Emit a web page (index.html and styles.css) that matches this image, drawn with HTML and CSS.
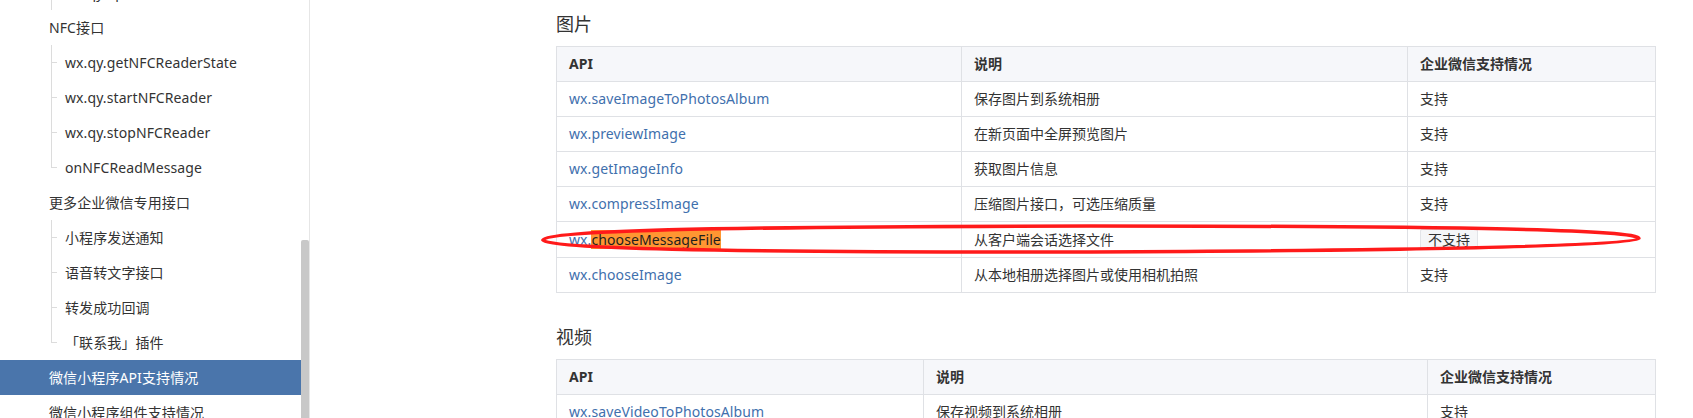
FILE: index.html
```html
<!DOCTYPE html>
<html lang="zh-CN">
<head>
<meta charset="utf-8">
<title>微信小程序API支持情况</title>
<link rel="stylesheet" href="styles.css">
</head>
<body>
<div class="page">
  <aside class="sidebar">
    <nav class="nav">
      <ul class="tree">
        <li class="sub cut">wx.qy.openUserProfile</li>
        <li class="group">NFC接口</li>
        <li class="subs">
          <ul>
            <li class="sub">wx.qy.getNFCReaderState</li>
            <li class="sub">wx.qy.startNFCReader</li>
            <li class="sub">wx.qy.stopNFCReader</li>
            <li class="sub last">onNFCReadMessage</li>
          </ul>
        </li>
        <li class="group">更多企业微信专用接口</li>
        <li class="subs">
          <ul>
            <li class="sub">小程序发送通知</li>
            <li class="sub">语音转文字接口</li>
            <li class="sub">转发成功回调</li>
            <li class="sub last">「联系我」插件</li>
          </ul>
        </li>
        <li class="group active">微信小程序API支持情况</li>
        <li class="group">微信小程序组件支持情况</li>
      </ul>
    </nav>
    <div class="scrollbar"><div class="thumb"></div></div>
  </aside>

  <main class="content">
    <h3 class="section-title">图片</h3>
    <table class="api-table t-image">
      <colgroup><col class="c1"><col class="c2"><col class="c3"></colgroup>
      <thead>
        <tr><th>API</th><th>说明</th><th>企业微信支持情况</th></tr>
      </thead>
      <tbody>
        <tr><td><a class="api-link">wx.saveImageToPhotosAlbum</a></td><td>保存图片到系统相册</td><td>支持</td></tr>
        <tr><td><a class="api-link">wx.previewImage</a></td><td>在新页面中全屏预览图片</td><td>支持</td></tr>
        <tr><td><a class="api-link">wx.getImageInfo</a></td><td>获取图片信息</td><td>支持</td></tr>
        <tr><td><a class="api-link">wx.compressImage</a></td><td>压缩图片接口，可选压缩质量</td><td>支持</td></tr>
        <tr class="tall"><td><a class="api-link">wx.<mark class="find">chooseMessageFile</mark></a></td><td>从客户端会话选择文件</td><td><code class="tag">不支持</code></td></tr>
        <tr><td><a class="api-link">wx.chooseImage</a></td><td>从本地相册选择图片或使用相机拍照</td><td>支持</td></tr>
      </tbody>
    </table>

    <h3 class="section-title">视频</h3>
    <table class="api-table t-video">
      <colgroup><col class="c1"><col class="c2"><col class="c3"></colgroup>
      <thead>
        <tr><th>API</th><th>说明</th><th>企业微信支持情况</th></tr>
      </thead>
      <tbody>
        <tr><td><a class="api-link">wx.saveVideoToPhotosAlbum</a></td><td>保存视频到系统相册</td><td>支持</td></tr>
        <tr><td><a class="api-link">wx.chooseVideo</a></td><td>拍摄视频或从手机相册中选视频</td><td>支持</td></tr>
      </tbody>
    </table>
  </main>

  <svg class="annotation" width="1693" height="418" viewBox="0 0 1693 418" aria-hidden="true">
    <path d="M543 240 C548 231 690 226.5 1091 226 C1470 226 1639 230 1639 238.5 C1639 246 1420 250.5 1091 252 C700 252.5 548 248 543 240 Z" fill="none" stroke="#ff1a1a" stroke-width="3.5"/>
  </svg>
</div>
</body>
</html>
```

FILE: styles.css
```css
* { box-sizing: border-box; }

html, body {
  margin: 0;
  padding: 0;
  background: #fff;
}

body {
  width: 1693px;
  height: 418px;
  overflow: hidden;
  font-family: "Noto Sans", "Noto Sans CJK SC", sans-serif;
  font-size: 14px;
  color: #333;
}

.page {
  position: relative;
  display: flex;
  height: 418px;
  overflow: hidden;
}

/* ---------- sidebar ---------- */
.sidebar {
  flex: 0 0 310px;
  display: flex;
  border-right: 1px solid #e6e6e6;
  height: 418px;
  overflow: hidden;
}

.nav {
  flex: 0 0 301px;
  overflow: hidden;
}

.tree, .tree ul {
  list-style: none;
  margin: 0;
  padding: 0;
}

.tree {
  margin-top: -25px;
}

.group {
  height: 35px;
  line-height: 35px;
  padding-left: 49px;
  color: #333;
  white-space: nowrap;
  letter-spacing: 0.1px;
}

.group.active {
  background: #4a75ab;
  color: #fff;
}

.subs ul {
  margin-left: 51px;
}

.sub {
  height: 35px;
  line-height: 35px;
  padding-left: 14px;
  white-space: nowrap;
  color: #333;
  letter-spacing: 0.1px;
  background:
    linear-gradient(#dcdcdc, #dcdcdc) 0 0 / 1px 100% no-repeat,
    linear-gradient(#dcdcdc, #dcdcdc) 0 50% / 6px 1px no-repeat;
}

.sub.last {
  background:
    linear-gradient(#dcdcdc, #dcdcdc) 0 0 / 1px 50% no-repeat,
    linear-gradient(#dcdcdc, #dcdcdc) 0 50% / 6px 1px no-repeat;
}

.sub.cut {
  margin-left: 51px;
}

.scrollbar {
  flex: 0 0 8px;
  padding-top: 240px;
}

.thumb {
  height: 200px;
  background: #c8c8c8;
  border-radius: 2px 2px 0 0;
}

/* ---------- content ---------- */
.content {
  flex: 1 1 auto;
  padding: 11px 38px 0 246px;
}

.section-title {
  margin: 0;
  height: 26px;
  line-height: 26px;
  font-size: 18px;
  font-weight: normal;
  color: #333;
}

.api-table {
  width: 1099px;
  border-collapse: collapse;
  table-layout: fixed;
  margin: 9px 0 31px;
}

.t-image .c1 { width: 405px; }
.t-image .c2 { width: 446px; }
.t-image .c3 { width: 248px; }

.t-video .c1 { width: 367px; }
.t-video .c2 { width: 504px; }
.t-video .c3 { width: 228px; }

.api-table th,
.api-table td {
  border: 1px solid #dfe1e5;
  height: 35px;
  padding: 0 12px;
  text-align: left;
  vertical-align: middle;
  line-height: 20px;
  white-space: nowrap;
}

.api-table th {
  background: #f6f7fa;
  font-weight: bold;
  color: #333;
}

.api-table tr.tall td {
  height: 36px;
}

.api-link {
  color: #3f70ad;
  text-decoration: none;
  letter-spacing: 0.1px;
}

.find {
  background: #ff9632;
  color: #1e1e1e;
  padding: 0;
}

.tag {
  display: inline-block;
  font-family: "Noto Sans CJK SC", sans-serif;
  font-size: 14px;
  line-height: 18px;
  padding: 0 7px;
  border: 1px solid #e2e4e8;
  background: #f5f6f8;
  border-radius: 2px;
  color: #333;
}

/* ---------- annotation overlay ---------- */
.annotation {
  position: absolute;
  left: 0;
  top: 0;
  pointer-events: none;
}
```
